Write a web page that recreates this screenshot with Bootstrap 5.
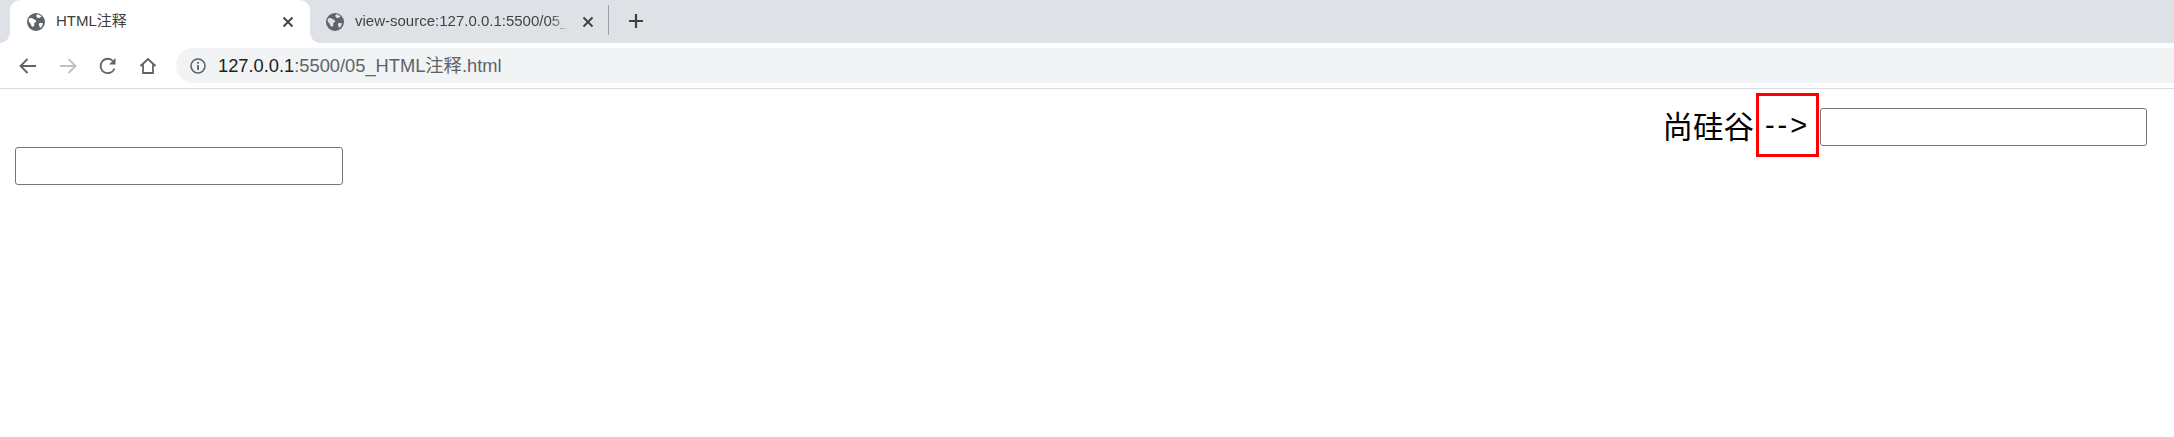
<!DOCTYPE html>
<html lang="zh-CN">
<head>
  <meta charset="UTF-8">
  <meta name="viewport" content="width=device-width, initial-scale=1">
  <title>HTML注释</title>
  <link href="https://cdn.jsdelivr.net/npm/bootstrap@5.3.2/dist/css/bootstrap.min.css" rel="stylesheet">
  <style>
    body {
      background: #fff;
      font-family: "Liberation Sans", "Noto Sans CJK SC", sans-serif;
      overflow: hidden;
    }

    .tab-strip {
      height: 43px;
      background: #dee1e6;
      padding-left: 10px;
    }

    .tab-item {
      height: 43px;
      font-size: 15px;
      color: #3c4043;
      white-space: nowrap;
    }

    .tab-active {
      width: 300px;
      background: #fff;
      border-radius: 10px 10px 0 0;
      padding: 0 15px 0 16px;
      position: relative;
    }

    .tab-active::before,
    .tab-active::after {
      content: "";
      position: absolute;
      bottom: 0;
      width: 10px;
      height: 10px;
      background: radial-gradient(circle at 0 0, #dee1e6 9.5px, #fff 10px);
    }

    .tab-active::before {
      left: -10px;
    }

    .tab-active::after {
      right: -10px;
      background: radial-gradient(circle at 100% 0, #dee1e6 9.5px, #fff 10px);
    }

    .tab-other {
      width: 300px;
      padding: 0 15px 0 15px;
    }

    .tab-title {
      margin-left: 10px;
      flex: 1 1 0;
    }

    .tab-fade {
      background: linear-gradient(to right, #3c4043 92%, #dee1e6);
      -webkit-background-clip: text;
      background-clip: text;
      color: transparent;
    }

    .tab-sep {
      width: 1px;
      height: 30px;
      background: #9aa0a6;
      margin: 0 0 3px -2px;
    }

    .new-tab {
      margin-left: 18px;
      margin-bottom: 2px;
    }

    .tool-bar {
      box-sizing: content-box;
      height: 35px;
      padding: 5px 0 5px 18px;
      border-bottom: 1px solid #dadce0;
    }

    .tool-icon {
      width: 20px;
      height: 20px;
      margin-right: 20px;
      flex: none;
    }

    .addr-bar {
      flex: 1 1 0;
      height: 35px;
      margin-left: -2px;
      background: #f1f3f4;
      border-radius: 17.5px 0 0 17.5px;
      padding-left: 14px;
      font-size: 18.3px;
      color: #5f6368;
    }

    .addr-host {
      color: #202124;
    }

    .addr-text {
      margin-left: 12px;
    }

    .page-body {
      padding-top: 4px;
      padding-left: 15px;
      padding-right: 27px;
    }

    .line-one {
      font-size: 30.5px;
      line-height: 64px;
      height: 64px;
      color: #000;
    }

    .name-text {
      font-family: "Noto Sans CJK SC", sans-serif;
      margin-right: 2px;
    }

    .red-box {
      width: 63px;
      height: 64px;
      border: 3px solid #f00;
      font-family: "Liberation Sans", sans-serif;
      font-size: 29px;
      font-weight: 300;
      letter-spacing: 3px;
      margin-right: 1px;
    }

    .plain-input {
      width: 328px;
      height: 38px;
      border: 1px solid #767676;
      border-radius: 3px;
      background: #fff;
      padding: 0;
      display: block;
    }

    .input-first {
      width: 327px;
      margin-top: 4px;
    }

    .line-two {
      margin-top: -10px;
    }
  </style>
</head>
<body>
  <div class="tab-strip d-flex align-items-end">
    <div class="tab-item tab-active d-flex align-items-center">
      <svg width="20" height="20" viewBox="0 0 20 20"><circle cx="10" cy="10" r="9" fill="#5f6368"/><path d="M3 6.500c2-1 3.500-.5 4.500.5s2 .5 2.500 1.500-.5 2-1.500 2.500.5 2-.5 3-2 1-2.500 0-.5-2-1.500-3S2 9 3 6.500zM11 2.500c1.500 0 3 .5 4.500 2-1 .5-1.500 1.500-2.500 1.500s-2-.5-2.500-1.500S10.500 3 11 2.500zM14 11c1 0 2 0 3 .5-.5 2-1.500 3.500-3 4.500-.5-1-.5-2-1-3s0-2 1-2z" fill="#fff"/></svg>
      <span class="tab-title">HTML注释</span>
      <svg width="14" height="14" viewBox="0 0 14 14"><path d="M2.500 2.500l9 9M11.500 2.500l-9 9" stroke="#3c4043" stroke-width="1.800"/></svg>
    </div>
    <div class="tab-item tab-other d-flex align-items-center">
      <svg width="20" height="20" viewBox="0 0 20 20"><circle cx="10" cy="10" r="9" fill="#5f6368"/><path d="M3 6.500c2-1 3.500-.5 4.500.5s2 .5 2.500 1.500-.5 2-1.500 2.500.5 2-.5 3-2 1-2.500 0-.5-2-1.500-3S2 9 3 6.500zM11 2.500c1.500 0 3 .5 4.500 2-1 .5-1.500 1.500-2.500 1.500s-2-.5-2.500-1.500S10.500 3 11 2.500zM14 11c1 0 2 0 3 .5-.5 2-1.500 3.500-3 4.500-.5-1-.5-2-1-3s0-2 1-2z" fill="#dee1e6"/></svg>
      <span class="tab-title"><span class="tab-fade">view-source:127.0.0.1:5500/05_</span></span>
      <svg width="14" height="14" viewBox="0 0 14 14"><path d="M2.500 2.500l9 9M11.500 2.500l-9 9" stroke="#3c4043" stroke-width="1.800"/></svg>
    </div>
    <div class="tab-sep align-self-center"></div>
    <svg class="new-tab align-self-center" width="18" height="18" viewBox="0 0 18 18"><path d="M9 2v14M2 9h14" stroke="#3c4043" stroke-width="2.200"/></svg>
  </div>

  <div class="tool-bar d-flex align-items-center">
    <svg class="tool-icon" viewBox="0 0 20 20" fill="none"><path d="M18 10H3M9.500 3L2.500 10l7 7" stroke="#5f6368" stroke-width="1.800"/></svg>
    <svg class="tool-icon" viewBox="0 0 20 20" fill="none"><path d="M2 10h15M10.500 3l7 7-7 7" stroke="#bdc1c6" stroke-width="1.800"/></svg>
    <svg class="tool-icon" viewBox="0 0 20 20" fill="none"><path d="M16.500 12.500A7.200 7.200 0 1 1 15 5" stroke="#5f6368" stroke-width="1.800"/><path d="M17.500 2v6.500H11z" fill="#5f6368"/></svg>
    <svg class="tool-icon" viewBox="0 0 20 20" fill="none"><path d="M2.500 10L10 3l7.500 7M5 8.500V17h10V8.500" stroke="#5f6368" stroke-width="1.800"/></svg>
    <div class="addr-bar d-flex align-items-center">
      <svg width="16" height="16" viewBox="0 0 16 16" fill="none"><circle cx="8" cy="8" r="7" stroke="#5f6368" stroke-width="1.600"/><path d="M8 7v5M8 4v1.800" stroke="#5f6368" stroke-width="1.800"/></svg>
      <span class="addr-text"><span class="addr-host">127.0.0.1</span>:5500/05_HTML注释.html</span>
    </div>
  </div>

  <div class="page-body">
    <div class="line-one d-flex justify-content-end align-items-center">
      <span class="name-text">尚硅谷</span>
      <span class="red-box d-flex align-items-center justify-content-center">--&gt;</span>
      <input class="plain-input input-first" type="text">
    </div>
    <div class="line-two">
      <input class="plain-input" type="text">
    </div>
  </div>
  <script src="https://cdn.jsdelivr.net/npm/bootstrap@5.3.2/dist/js/bootstrap.bundle.min.js"></script>
</body>
</html>
